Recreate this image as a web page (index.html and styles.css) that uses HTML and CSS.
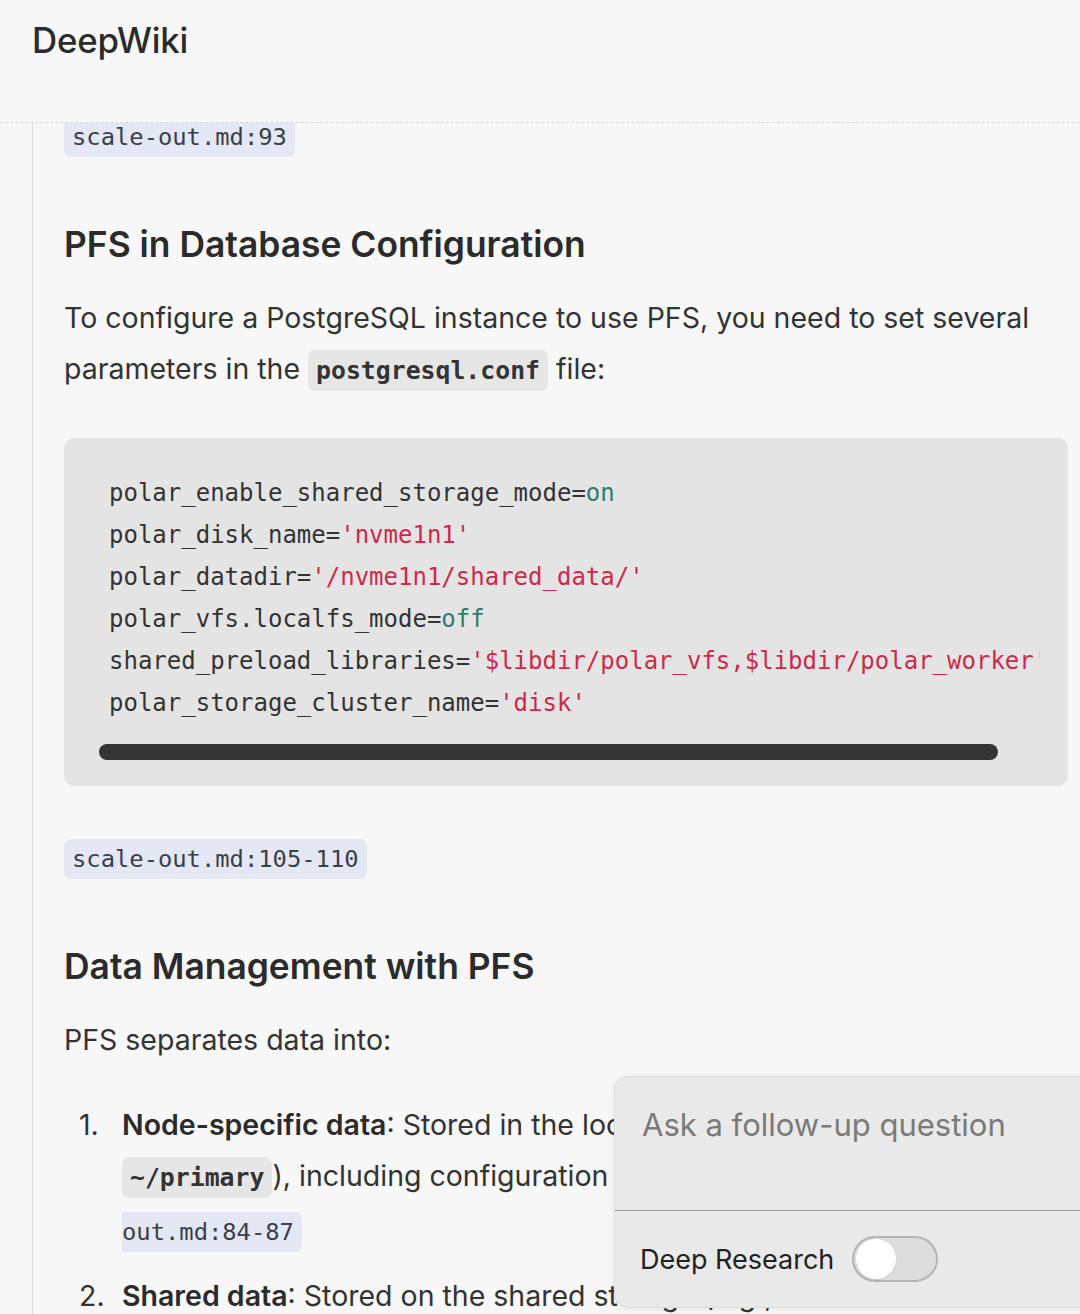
FILE: index.html
```html
<!DOCTYPE html>
<html lang="en">
<head>
<meta charset="utf-8">
<title>DeepWiki</title>
<link rel="stylesheet" href="styles.css">
</head>
<body>
<header class="topbar">
  <div class="brand">DeepWiki</div>
</header>
<main class="content">
  <div class="article">
    <p class="cite-row first"><span class="cite">scale-out.md:93</span></p>

    <h2 class="heading">PFS in Database Configuration</h2>
    <p class="para">To configure a PostgreSQL instance to use PFS, you need to set several parameters in the <code class="inline-code">postgresql.conf</code> file:</p>

    <div class="code-block">
      <div class="code-scroll">
<pre class="code">polar_enable_shared_storage_mode=<span class="kw">on</span>
polar_disk_name=<span class="str">'nvme1n1'</span>
polar_datadir=<span class="str">'/nvme1n1/shared_data/'</span>
polar_vfs.localfs_mode=<span class="kw">off</span>
shared_preload_libraries=<span class="str">'$libdir/polar_vfs,$libdir/polar_worker'</span>
polar_storage_cluster_name=<span class="str">'disk'</span></pre>
      </div>
      <div class="scrollbar"><div class="thumb"></div></div>
    </div>

    <p class="cite-row"><span class="cite">scale-out.md:105-110</span></p>

    <h2 class="heading">Data Management with PFS</h2>
    <p class="para">PFS separates data into:</p>

    <ol class="list">
      <li><strong>Node-specific data</strong>: Stored in the local directory (e.g.,<br><code class="inline-code">~/primary</code>), including configuration files and logs <span class="cite">scale-<br>out.md:84-87</span></li>
      <li><strong>Shared data</strong>: Stored on the shared storage (e.g., <code class="inline-code">/nvme1n1/shared_data/</code>)</li>
    </ol>
  </div>
</main>

<div class="ask-panel">
  <div class="ask-input">Ask a follow-up question</div>
  <div class="ask-footer">
    <span class="ask-label">Deep Research</span>
    <span class="toggle"><span class="knob"></span></span>
  </div>
</div>
</body>
</html>
```

FILE: styles.css
```css
* { box-sizing: border-box; }

html, body {
  margin: 0;
  padding: 0;
}

body {
  width: 1080px;
  height: 1314px;
  overflow: hidden;
  background: #f7f7f7;
  color: #2e2e2e;
  font-family: Inter, "Noto Sans", sans-serif;
  position: relative;
}

.topbar {
  height: 123px;
  padding-left: 32px;
  border-bottom: 1px dashed #d6d6d6;
  position: relative;
  z-index: 2;
  background: #f7f7f7;
}

.brand {
  padding-top: 19px;
  font-size: 34.8px;
  font-weight: 500;
  color: #2b2b2b;
  letter-spacing: -0.2px;
}

.content {
  margin-left: 32px;
  border-left: 1.5px solid #dcdcdc;
  padding-left: 31px;
  padding-right: 12px;
  height: 1191px;
  overflow: hidden;
}

.article { margin-top: -6px; }

.cite-row {
  margin: 0;
  line-height: 40px;
}

.cite {
  font-family: "DejaVu Sans Mono", "Liberation Mono", monospace;
  font-size: 23.8px;
  color: #3a3f4a;
  background: #e3e8f4;
  border-radius: 7px;
  padding: 6px 8px;
}

.heading {
  font-size: 35.4px;
  font-weight: 600;
  color: #2b2b2b;
  margin: 66px 0 0;
  line-height: 40px;
}

.para {
  font-size: 28.5px;
  line-height: 51px;
  margin: 27px 0 0;
  color: #333;
}

.inline-code {
  font-family: "DejaVu Sans Mono", "Liberation Mono", monospace;
  font-weight: bold;
  font-size: 24.8px;
  background: #e6e6e6;
  border-radius: 7px;
  padding: 6px 8px;
  color: #333;
}

.code-block {
  margin-top: 42px;
  background: #e4e4e4;
  border-radius: 10px;
  padding: 34px 0 26px 45px;
}

.code-scroll {
  margin-right: 28px;
  overflow: hidden;
}

.code {
  margin: 0;
  font-family: "DejaVu Sans Mono", "Liberation Mono", monospace;
  font-size: 24px;
  line-height: 42px;
  color: #333;
  white-space: pre;
}

.kw { color: #2e7d6e; }
.str { color: #cc2a4a; }

.scrollbar {
  margin: 20px 0 0 -10px;
  width: 899px;
  height: 16px;
}

.thumb {
  height: 16px;
  border-radius: 8px;
  background: #353535;
}

.content .cite-row:not(.first) { margin-top: 53px; }

.list {
  margin: 34px 0 0;
  padding-left: 58px;
  font-size: 28.5px;
  line-height: 51px;
  color: #333;
  list-style: none;
  counter-reset: item;
}

.list li {
  margin-bottom: 12px;
  position: relative;
  counter-increment: item;
}

.list li::before {
  content: counter(item) ".";
  position: absolute;
  left: -43px;
  top: 0;
}

.list strong { font-weight: 600; color: #2b2b2b; }

.ask-panel {
  position: absolute;
  left: 614px;
  top: 1076px;
  width: 490px;
  height: 232px;
  background: #e9e9e9;
  border: 1px solid #dcdcdc;
  border-radius: 14px;
  box-shadow: 0 2px 8px rgba(0,0,0,0.06);
  z-index: 5;
  overflow: hidden;
}

.ask-input {
  height: 134px;
  padding: 29px 0 0 27px;
  font-size: 31px;
  color: #7a7a7a;
  border-bottom: 1.5px solid #9c9c9c;
}

.ask-footer {
  display: flex;
  align-items: center;
  gap: 18px;
  padding: 25px 0 0 25px;
}

.ask-label {
  font-size: 27px;
  color: #222;
}

.toggle {
  width: 86px;
  height: 46px;
  border-radius: 23px;
  border: 2px solid #b4b4b4;
  background: #dcdcdc;
  display: flex;
  align-items: center;
  padding-left: 2px;
}

.knob {
  width: 40px;
  height: 40px;
  border-radius: 50%;
  background: #fff;
  box-shadow: 0 1px 2px rgba(0,0,0,0.08);
}
```
